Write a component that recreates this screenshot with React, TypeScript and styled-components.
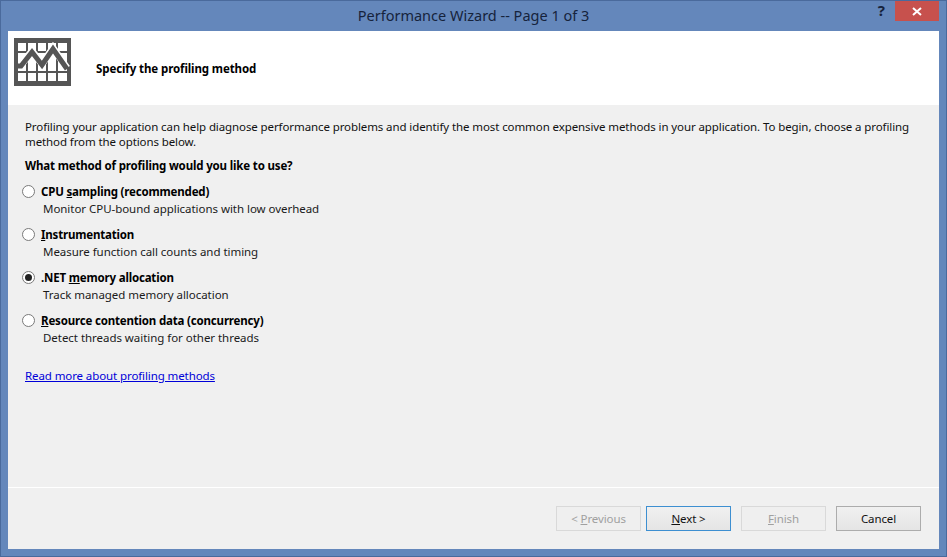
import React from "react";
import styled, { createGlobalStyle } from "styled-components";

const Global = createGlobalStyle`
  html, body { margin: 0; padding: 0; background: #6487bb; }
  #root { width: 947px; height: 557px; overflow: hidden; }
  * { box-sizing: border-box; }
`;

const Frame = styled.div`
  width: 947px;
  height: 557px;
  display: flex;
  flex-direction: column;
  background: #6487bb;
  border: 1px solid #4a6a9c;
  font-family: "Noto Sans", "Open Sans", sans-serif;
  font-size: 11.5px;
  letter-spacing: -0.1px;
  color: #111;
`;

const TitleBar = styled.div`
  position: relative;
  height: 30px;
  flex: none;
  display: flex;
  justify-content: center;
  padding-top: 4px;
  font-size: 14.5px;
  line-height: 20px;
  letter-spacing: 0;
  color: #16233c;
`;

const HelpMark = styled.span`
  position: absolute;
  top: -1px;
  right: 61px;
  font-size: 15px;
  line-height: 20px;
  font-weight: 700;
  color: #16233c;
`;

const CloseButton = styled.div`
  position: absolute;
  top: 0;
  right: 7px;
  width: 44px;
  height: 20px;
  background: #c7514d;
  display: flex;
  align-items: center;
  justify-content: center;
`;

const Client = styled.div`
  flex: 1;
  margin: 0 7px 7px;
  display: flex;
  flex-direction: column;
  background: #f0f0f0;
`;

const Header = styled.div`
  height: 74px;
  flex: none;
  background: #fff;
  display: flex;
  padding: 7px 0 0 6px;
`;

const HeaderTitle = styled.div`
  margin: 23px 0 0 25px;
  font-weight: 700;
  line-height: 16px;
  color: #000;
`;

const Body = styled.div`
  flex: 1;
  padding: 14px 17px 0;
  display: flex;
  flex-direction: column;
`;

const Intro = styled.p`
  margin: 0;
  line-height: 15px;
`;

const Question = styled.div`
  margin-top: 9px;
  font-weight: 700;
  line-height: 16px;
  letter-spacing: -0.16px;
  color: #000;
`;

const OptionList = styled.div`
  margin-top: 9px;
  display: flex;
  flex-direction: column;
  gap: 9px;
`;

const Option = styled.div`
  display: grid;
  grid-template-columns: 19px 1fr;
  margin-left: -3px;
`;

const Radio = styled.span<{ $checked?: boolean }>`
  width: 13px;
  height: 13px;
  margin-top: 2px;
  border-radius: 50%;
  border: 1px solid #7a7a7a;
  background: #fff;
  display: flex;
  align-items: center;
  justify-content: center;
  &::after {
    content: "";
    display: ${(p) => (p.$checked ? "block" : "none")};
    width: 7px;
    height: 7px;
    border-radius: 50%;
    background: #222;
  }
`;

const OptionLabel = styled.div`
  font-weight: 700;
  line-height: 17px;
  letter-spacing: -0.18px;
  color: #000;
`;

const OptionHint = styled.div`
  grid-column: 2;
  margin-left: 2px;
  line-height: 17px;
  letter-spacing: -0.04px;
  color: #1a1a1a;
`;

const ReadMore = styled.a`
  margin-top: 22px;
  align-self: flex-start;
  line-height: 16px;
  color: #0000d8;
  text-decoration: underline;
`;

const Footer = styled.div`
  height: 62px;
  flex: none;
  border-top: 1px solid #fff;
  padding: 18px 18px 0 0;
  display: flex;
  justify-content: flex-end;
`;

const Button = styled.div<{ $variant?: "disabled" | "default" }>`
  width: 85px;
  height: 25px;
  margin-left: ${(p) => (p.$variant === "default" ? "5px" : "10px")};
  text-align: center;
  line-height: 23px;
  border: 1px solid
    ${(p) =>
      p.$variant === "disabled" ? "#d9d9d9" : p.$variant === "default" ? "#3d8fd1" : "#acacac"};
  background: ${(p) =>
    p.$variant === "disabled" ? "#efefef" : "linear-gradient(#f0f0f0, #e5e5e5)"};
  color: ${(p) => (p.$variant === "disabled" ? "#a0a0a0" : "#111")};
`;

const Shortcut = styled.span`
  text-decoration: underline;
`;

const ChartIcon = () => (
  <svg width="57" height="48" viewBox="0 0 57 48" style={{ display: "block" }}>
    <rect width="57" height="48" fill="#555" />
    {[4, 14, 24, 34, 44].map((x) =>
      [
        [5, 8],
        [15, 18],
        [35, 8],
      ].map(([y, h]) => <rect key={`${x}-${y}`} x={x} y={y} width={x === 44 ? 9 : 8} height={h} fill="#fff" />)
    )}
    <path d="M4 27 L7 27 L18 13 L28 26 L39 10 L53 30" fill="none" stroke="#fff" strokeWidth="7" />
    <path d="M4 28 L7 28 L18 14 L28 27 L39 11 L53 31" fill="none" stroke="#555" strokeWidth="5" />
  </svg>
);

const options = [
  { label: <>CPU <Shortcut>s</Shortcut>ampling (recommended)</>, hint: "Monitor CPU-bound applications with low overhead" },
  { label: <><Shortcut>I</Shortcut>nstrumentation</>, hint: "Measure function call counts and timing" },
  { label: <>.NET <Shortcut>m</Shortcut>emory allocation</>, hint: "Track managed memory allocation", checked: true },
  { label: <><Shortcut>R</Shortcut>esource contention data (concurrency)</>, hint: "Detect threads waiting for other threads" },
];

export default function App() {
  return (
    <>
      <Global />
      <Frame>
        <TitleBar>
          Performance Wizard -- Page 1 of 3
          <HelpMark>?</HelpMark>
          <CloseButton>
            <svg width="10" height="9" viewBox="0 0 10 9">
              <path d="M1 1 L9 8 M9 1 L1 8" stroke="#fff" strokeWidth="2" />
            </svg>
          </CloseButton>
        </TitleBar>
        <Client>
          <Header>
            <ChartIcon />
            <HeaderTitle>Specify the profiling method</HeaderTitle>
          </Header>
          <Body>
            <Intro>
              Profiling your application can help diagnose performance problems and identify the most common expensive methods in your application. To begin, choose a profiling method from the options below.
            </Intro>
            <Question>What method of profiling would you like to use?</Question>
            <OptionList>
              {options.map((o, i) => (
                <Option key={i}>
                  <Radio $checked={o.checked} />
                  <OptionLabel>{o.label}</OptionLabel>
                  <OptionHint>{o.hint}</OptionHint>
                </Option>
              ))}
            </OptionList>
            <ReadMore href="#">Read more about profiling methods</ReadMore>
          </Body>
          <Footer>
            <Button $variant="disabled">&lt; <Shortcut>P</Shortcut>revious</Button>
            <Button $variant="default"><Shortcut>N</Shortcut>ext &gt;</Button>
            <Button $variant="disabled"><Shortcut>F</Shortcut>inish</Button>
            <Button>Cancel</Button>
          </Footer>
        </Client>
      </Frame>
    </>
  );
}
